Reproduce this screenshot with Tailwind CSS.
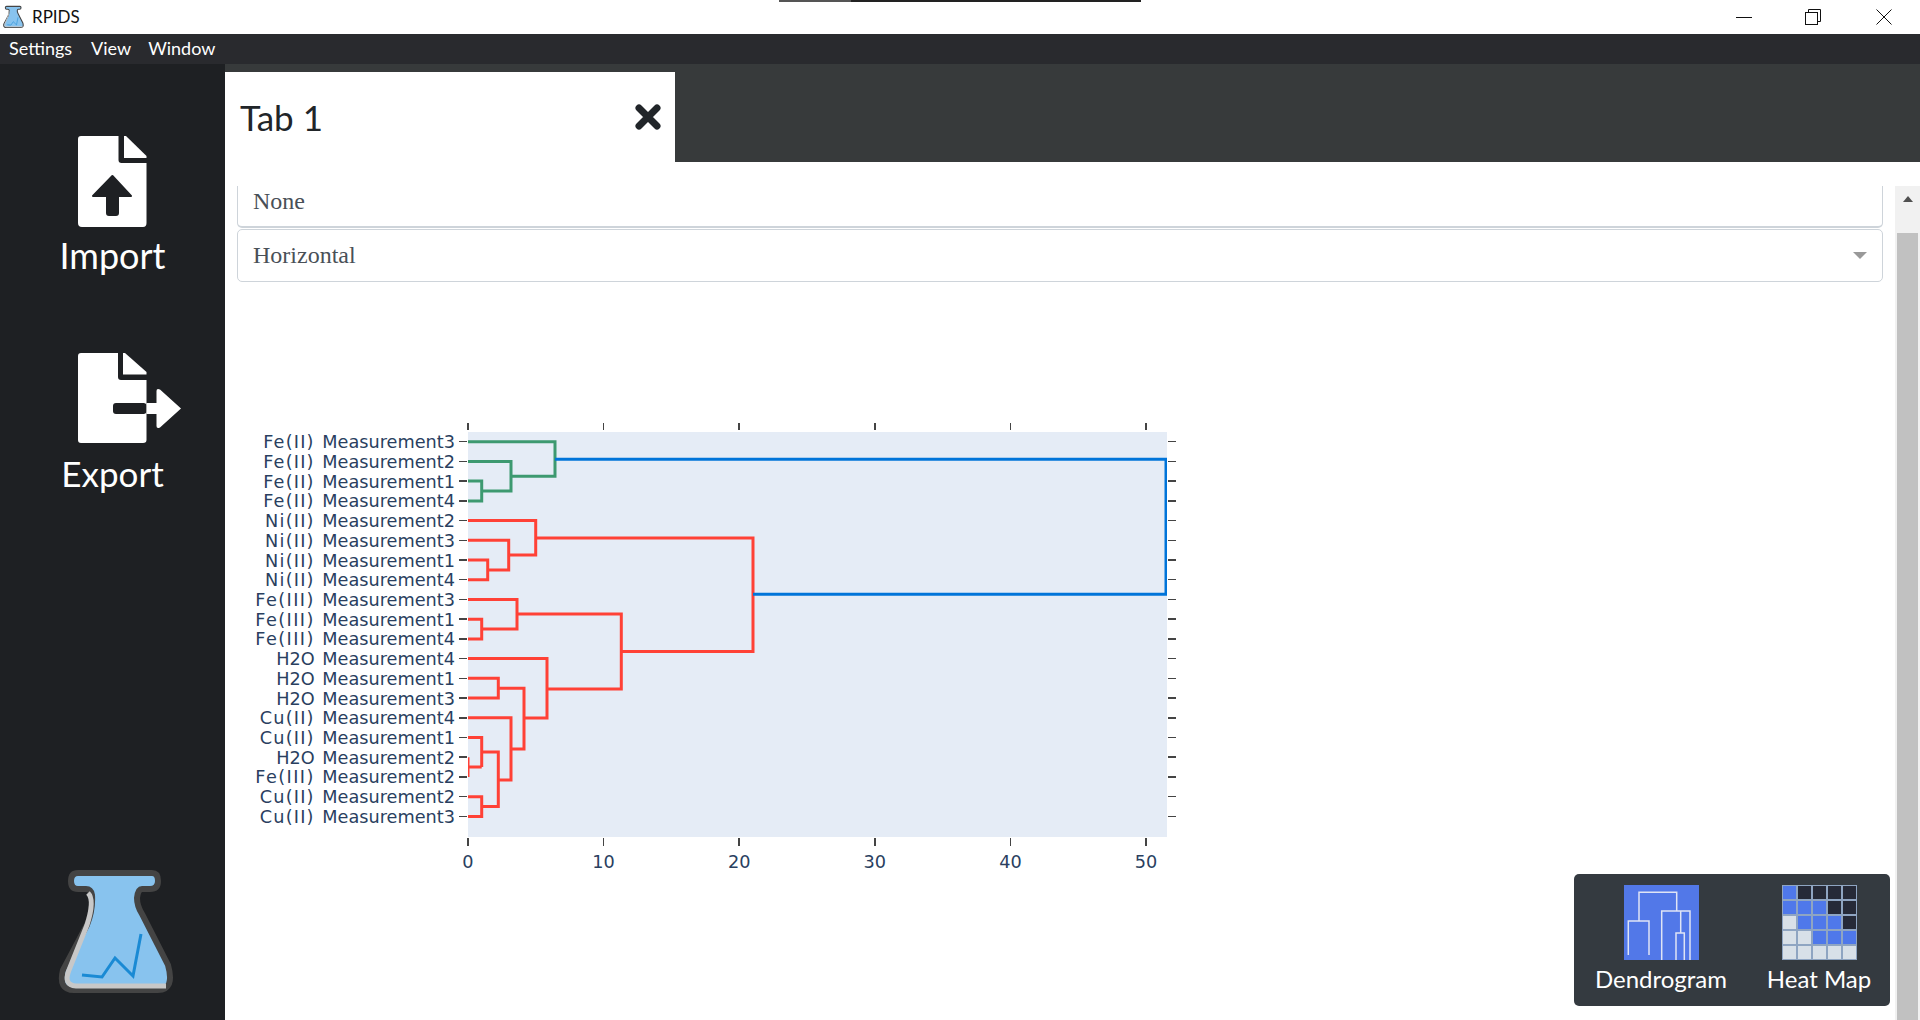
<!DOCTYPE html>
<html lang="en">
<head>
    <meta charset="UTF-8">
    <title>RPIDS</title>
    <script src="https://cdn.jsdelivr.net/npm/@tailwindcss/browser@4"></script>
</head>
<body class="bg-white font-['Lato',sans-serif] overflow-hidden">
    <svg class="hidden">
        <symbol id="flask" viewBox="58 866 122 132">
            <path d="M78 873H152Q158 873 158 881Q158 889 150 889H142Q138 889 137 898Q137 906 142 914L168 965Q175 990 158 990H74Q58 990 63 970L87 925Q93 910 92 895Q91 889 86 889H78Q71 889 71 881Q71 873 78 873Z" fill="#88c3ee" stroke="#444" stroke-width="6"/>
            <path d="M88 893Q95 900 87 925L69 970Q63 985 76 986H166" fill="none" stroke="#c8c8c8" stroke-width="5"/>
            <path d="M82 975L102 977L115 958L133 976L141 934" fill="none" stroke="#1a8ad4" stroke-width="3"/>
        </symbol>
    </svg>

    <div class="h-screen flex flex-col relative">
        <!-- window title bar -->
        <div class="h-[34px] flex items-center bg-white relative">
            <svg class="w-[22px] h-[24px] ml-[3px]"><use href="#flask"/></svg>
            <span class="ml-[7px] text-[17px] text-[#111]">RPIDS</span>
            <div class="absolute top-0 left-[779px] w-[72px] h-[2px] bg-[#555]"></div>
            <div class="absolute top-0 left-[851px] w-[290px] h-[2px] bg-[#222]"></div>
            <div class="ml-auto flex items-center">
                <svg class="w-[16px] h-[16px] mr-[53px]" viewBox="0 0 16 16"><path d="M0 8.500H16" stroke="#111"/></svg>
                <svg class="w-[16px] h-[16px] mr-[55px]" viewBox="0 0 16 16" fill="none" stroke="#111"><path d="M3.500 3.500V.5H15.500V12.500H12.500"/><rect x=".5" y="3.500" width="12" height="12"/></svg>
                <svg class="w-[16px] h-[16px] mr-[28px]" viewBox="0 0 16 16"><path d="M.5 .5L15.500 15.500M15.500 .5L.5 15.500" stroke="#111"/></svg>
            </div>
        </div>

        <!-- menu bar -->
        <div class="h-[30px] bg-[#292a2e] flex items-center text-[18px] text-white pl-[9px] pb-[1px] gap-[19px]">
            <span>Settings</span>
            <span>View</span>
            <span class="-ml-[2px]">Window</span>
        </div>

        <div class="flex-1 flex min-h-0">
            <!-- sidebar -->
            <div class="w-[225px] bg-[#1e2023] text-white flex flex-col items-center relative">
                <svg class="w-[69px] h-[91px] mt-[72px]" viewBox="0 0 69 91">
                    <path d="M3 0H40.500V24Q40.500 27 43.500 27H68.500V87Q68.500 91 65 91H4Q0 91 0 87V3Q0 0 3 0Z" fill="#fff"/>
                    <path d="M46 0H48L68.500 20V22H46Z" fill="#fff"/>
                    <path d="M34.400 40L53 60H40V77Q40 79 38 79H31Q29 79 29 77V60H15Z" fill="#1e2023" stroke="#1e2023" stroke-width="2" stroke-linejoin="round"/>
                </svg>
                <span class="text-[36px] leading-[48px] mt-[4px]">Import</span>
                <svg class="w-[104px] h-[90px] mt-[74px] ml-[35px]" viewBox="0 0 104 90">
                    <path d="M3 0H40V24Q40 27 43 27H68.500V87Q68.500 90 65 90H3Q0 90 0 87V3Q0 0 3 0Z" fill="#fff"/>
                    <path d="M45 0H47L68.500 19V21.500H45Z" fill="#fff"/>
                    <rect x="35" y="50" width="33.500" height="11" rx="3" fill="#1e2023"/>
                    <path d="M68.500 50H78.500V38Q78.500 35 82 36.500L103 55.500L82 74.500Q78.500 76 78.500 73V61H68.500Z" fill="#fff"/>
                </svg>
                <span class="text-[35px] leading-[48px] mt-[6px]">Export</span>
                <svg class="absolute left-[58px] top-[802px] w-[122px] h-[132px]"><use href="#flask"/></svg>
            </div>

            <div class="flex-1 flex flex-col min-w-0 relative">
                <!-- tab strip -->
                <div class="h-[98px] bg-[#373a3b] pt-[8px] shrink-0">
                    <div class="w-[450px] h-[90px] bg-white flex items-center justify-between pl-[15px] pr-[14px]">
                        <span class="text-[35px] text-[#212529] pt-[1px]">Tab 1</span>
                        <svg class="w-[26px] h-[26px]" viewBox="0 0 26 26"><path d="M4 4L22 22M22 4L4 22" stroke="#212529" stroke-width="7" stroke-linecap="round"/></svg>
                    </div>
                </div>

                <div class="flex-1 flex pt-[24px] min-h-0">
                    <div class="flex-1 px-[12px] min-w-0 font-['Liberation_Serif',serif] text-[#495057] text-[24px]">
                        <div class="h-[42px] border border-t-0 border-b-2 border-[#ced4da] rounded-b-[5px] flex items-center px-[15px] pb-[10px]">None</div>
                        <div class="h-[53px] mt-[1px] border border-[#ced4da] rounded-[5px] flex items-center justify-between px-[15px] pb-[2px]">
                            <span>Horizontal</span>
                            <div class="w-0 h-0 border-x-[7.500px] border-x-transparent border-t-[7px] border-t-[#999] mt-[2px]"></div>
                        </div>

                        <!-- dendrogram -->
                        <svg id="chart" class="mt-[128px]" width="950" height="480" viewBox="237 410 950 480" fill="none">
                            <clipPath id="plot-clip"><rect x="468" y="432" width="699" height="405"/></clipPath>
                            <rect x="468" y="432" width="699" height="405" fill="#e5ecf6"/>
                            <g id="ticks" stroke="#444" stroke-width="1.500" shape-rendering="crispEdges"></g>
                            <g id="labels" fill="#2a3f5f" font-size="17.700" word-spacing="2" style="font-family:'DejaVu Sans',sans-serif"></g>
                            <g clip-path="url(#plot-clip)">
                                <g stroke="#3d9970" stroke-width="3">
                                    <path d="M468 481.100H481.700V500.900H468"/>
                                    <path d="M468 461.400H511V491H481.700"/>
                                    <path d="M468 441.700H555V476.200H511"/>
                                </g>
                                <g stroke="#ff4136" stroke-width="3">
                                    <path d="M468 560H487.700V579.700H468"/>
                                    <path d="M468 540.300H508.700V570H487.700"/>
                                    <path d="M468 520.600H535.700V555H508.700"/>
                                    <path d="M468 619.200H481.700V638.900H468"/>
                                    <path d="M468 599.500H517V629H481.700"/>
                                    <path d="M468 678.300H498.300V698.100H468"/>
                                    <path d="M468 757.200V776.900M468 767H481.700"/>
                                    <path d="M468 737.500H481.700V767"/>
                                    <path d="M468 796.700H481.700V816.400H468"/>
                                    <path d="M481.700 752H498.300V806.500H481.700"/>
                                    <path d="M468 717.800H511V780H498.300"/>
                                    <path d="M498.300 688.200H524V749H511"/>
                                    <path d="M468 658.600H547V718H524"/>
                                    <path d="M517 614H621.300V689H547"/>
                                    <path d="M535.700 538H753V651.500H621.300"/>
                                </g>
                                <path d="M555 459.300H1166V594.300H753" stroke="#0074d9" stroke-width="3"/>
                            </g>
                        </svg>
                    </div>

                    <!-- scrollbar -->
                    <div class="w-[25px] bg-[#f1f1f1] flex flex-col items-center shrink-0">
                        <div class="w-0 h-0 mt-[10px] border-x-[5.500px] border-x-transparent border-b-[6px] border-b-[#505050]"></div>
                        <div class="flex-1 w-[21px] mt-[31px] bg-[#c1c1c1]"></div>
                    </div>
                </div>

                <!-- chart type panel -->
                <div class="absolute left-[1349px] top-[810px] w-[316px] h-[132px] bg-[#343a40] rounded-[5px] flex text-white text-[24px] leading-[32px]">
                    <div class="w-[174px] flex flex-col items-center pt-[11px]">
                        <svg class="w-[75px] h-[75px] bg-[#5278e8]" viewBox="0 0 75 75" fill="none" stroke="#dfe4f5" stroke-width="1.500">
                            <path d="M15 36V7.300H52.700V26"/>
                            <path d="M4.300 70V36H25V70"/>
                            <path d="M37.700 75V26H66V75"/>
                            <path d="M56.700 26V48"/>
                            <path d="M52 75V48H60.300V75"/>
                        </svg>
                        <span class="mt-[3px]">Dendrogram</span>
                    </div>
                    <div class="flex-1 flex flex-col items-center pt-[11px]">
                        <div class="w-[75px] h-[75px] bg-[#8fa5c2] p-[1px] grid grid-cols-5 gap-[2px]">
                            <div class="bg-[#4f78ea]"></div><div class="bg-[#262a38]"></div><div class="bg-[#262a38]"></div><div class="bg-[#262a38]"></div><div class="bg-[#262a38]"></div>
                            <div class="bg-[#4f78ea]"></div><div class="bg-[#4f78ea]"></div><div class="bg-[#4f78ea]"></div><div class="bg-[#262a38]"></div><div class="bg-[#262a38]"></div>
                            <div class="bg-[#d8e0e8]"></div><div class="bg-[#4f78ea]"></div><div class="bg-[#4f78ea]"></div><div class="bg-[#4f78ea]"></div><div class="bg-[#262a38]"></div>
                            <div class="bg-[#d8e0e8]"></div><div class="bg-[#d8e0e8]"></div><div class="bg-[#4f78ea]"></div><div class="bg-[#4f78ea]"></div><div class="bg-[#4f78ea]"></div>
                            <div class="bg-[#d8e0e8]"></div><div class="bg-[#d8e0e8]"></div><div class="bg-[#d8e0e8]"></div><div class="bg-[#d8e0e8]"></div><div class="bg-[#d8e0e8]"></div>
                        </div>
                        <span class="mt-[3px]">Heat Map</span>
                    </div>
                </div>
            </div>
        </div>
    </div>

    <script>
        const names = [
            'Fe(II) Measurement3', 'Fe(II) Measurement2', 'Fe(II) Measurement1', 'Fe(II) Measurement4',
            'Ni(II) Measurement2', 'Ni(II) Measurement3', 'Ni(II) Measurement1', 'Ni(II) Measurement4',
            'Fe(III) Measurement3', 'Fe(III) Measurement1', 'Fe(III) Measurement4', 'H2O Measurement4',
            'H2O Measurement1', 'H2O Measurement3', 'Cu(II) Measurement4', 'Cu(II) Measurement1',
            'H2O Measurement2', 'Fe(III) Measurement2', 'Cu(II) Measurement2', 'Cu(II) Measurement3'
        ];
        const svgNS = 'http://www.w3.org/2000/svg';
        const ticks = document.getElementById('ticks');
        const labels = document.getElementById('labels');

        function add(parent, tag, attrs, text) {
            const el = document.createElementNS(svgNS, tag);
            Object.entries(attrs).forEach(([k, v]) => el.setAttribute(k, v));
            if (text !== undefined) el.textContent = text;
            parent.appendChild(el);
            return el;
        }

        names.forEach((name, i) => {
            const y = 441.7 + 19.72 * i;
            const [sample, rest] = name.split(' ');
            add(ticks, 'line', { x1: 459, x2: 466.5, y1: y, y2: y });
            add(ticks, 'line', { x1: 1168, x2: 1176, y1: y, y2: y });
            const label = add(labels, 'text', { x: 455, y: y + 6.5, 'text-anchor': 'end' });
            // the roman numerals are wider in the original font
            const spacing = sample.includes('III') ? 1.4 : sample.includes('II') ? 1.2 : 0;
            add(label, 'tspan', { 'letter-spacing': spacing }, sample);
            add(label, 'tspan', {}, ' ' + rest);
        });

        [0, 10, 20, 30, 40, 50].forEach(v => {
            const x = 468 + 13.56 * v;
            add(ticks, 'line', { x1: x, x2: x, y1: 423, y2: 430 });
            add(ticks, 'line', { x1: x, x2: x, y1: 838, y2: 846 });
            add(labels, 'text', { x: x, y: 868, 'text-anchor': 'middle' }, v);
        });
    </script>
</body>
</html>
